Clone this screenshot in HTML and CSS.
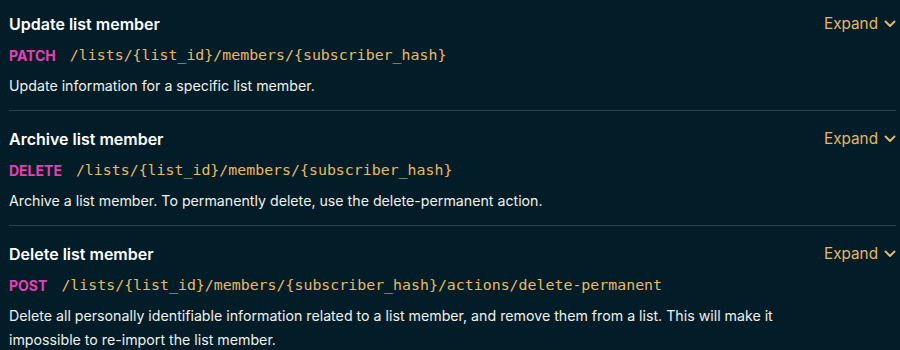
FILE: index.html
```html
<!DOCTYPE html>
<html lang="en">
<head>
<meta charset="utf-8">
<title>List member endpoints</title>
<link rel="stylesheet" href="styles.css">
</head>
<body>
<div class="list">
  <section class="endpoint">
    <div class="head">
      <h3 class="title">Update list member</h3>
      <button class="expand">Expand<svg class="chev" viewBox="0 0 12 8" width="12" height="8"><path d="M1.5 1.5 L6 6 L10.5 1.5" fill="none" stroke="currentColor" stroke-width="2" stroke-linecap="round" stroke-linejoin="round"/></svg></button>
    </div>
    <div class="route"><span class="method">PATCH</span><code class="path">/lists/{list_id}/members/{subscriber_hash}</code></div>
    <p class="desc">Update information for a specific list member.</p>
  </section>
  <section class="endpoint">
    <div class="head">
      <h3 class="title">Archive list member</h3>
      <button class="expand">Expand<svg class="chev" viewBox="0 0 12 8" width="12" height="8"><path d="M1.5 1.5 L6 6 L10.5 1.5" fill="none" stroke="currentColor" stroke-width="2" stroke-linecap="round" stroke-linejoin="round"/></svg></button>
    </div>
    <div class="route"><span class="method">DELETE</span><code class="path">/lists/{list_id}/members/{subscriber_hash}</code></div>
    <p class="desc">Archive a list member. To permanently delete, use the delete-permanent action.</p>
  </section>
  <section class="endpoint">
    <div class="head">
      <h3 class="title">Delete list member</h3>
      <button class="expand">Expand<svg class="chev" viewBox="0 0 12 8" width="12" height="8"><path d="M1.5 1.5 L6 6 L10.5 1.5" fill="none" stroke="currentColor" stroke-width="2" stroke-linecap="round" stroke-linejoin="round"/></svg></button>
    </div>
    <div class="route"><span class="method">POST</span><code class="path">/lists/{list_id}/members/{subscriber_hash}/actions/delete-permanent</code></div>
    <p class="desc">Delete all personally identifiable information related to a list member, and remove them from a list. This will make it impossible to re-import the list member.</p>
  </section>
</div>
</body>
</html>
```
FILE: styles.css
```css
html, body {
  margin: 0;
  padding: 0;
  background: #021c28;
}
body {
  font-family: "Inter", "Noto Sans", sans-serif;
  color: #f4f3ee;
  -webkit-font-smoothing: antialiased;
}
.list {
  padding: 12px 4px 0 9px;
}
.endpoint {
  padding: 16px 0 12px;
  border-bottom: 1px solid #2d414c;
}
.endpoint:first-child {
  padding-top: 0;
}
.endpoint:last-child {
  border-bottom: none;
}
.head {
  display: flex;
  align-items: center;
  justify-content: space-between;
  height: 24px;
}
.title {
  margin: 0;
  font-size: 16px;
  font-weight: 600;
  line-height: 24px;
  color: #ffffff;
}
.expand {
  display: flex;
  align-items: center;
  gap: 6px;
  background: none;
  border: 0;
  padding: 0;
  font-family: inherit;
  font-size: 15.3px;
  line-height: 24px;
  color: #e2b866;
}
.chev {
  display: block;
}
.route {
  display: flex;
  align-items: center;
  gap: 14px;
  margin-top: 7px;
  height: 24px;
}
.method {
  font-size: 14px;
  font-weight: 700;
  color: #e840b4;
}
.path {
  font-family: "DejaVu Sans Mono", "Liberation Mono", monospace;
  font-size: 14.9px;
  color: #eab963;
}
.desc {
  margin: 7px 0 0;
  font-size: 14.2px;
  line-height: 24px;
  max-width: 780px;
  color: #f1f0ea;
}
```
